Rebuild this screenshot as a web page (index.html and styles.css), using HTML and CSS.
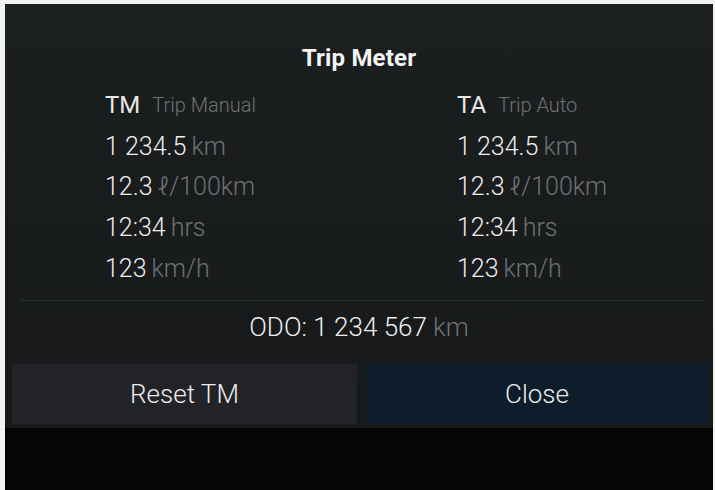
FILE: index.html
```html
<!DOCTYPE html>
<html>
<head>
<meta charset="utf-8">
<link rel="stylesheet" href="styles.css">
</head>
<body>
<div class="screen">
  <div class="panel">
    <h1 class="title">Trip Meter</h1>
    <div class="cols">
      <div class="col">
        <div class="row head"><span class="abbr">TM</span><span class="label">Trip Manual</span></div>
        <div class="row"><span class="val">1 234.5</span><span class="unit">km</span></div>
        <div class="row"><span class="val">12.3</span><span class="unit">ℓ/100km</span></div>
        <div class="row"><span class="val">12:34</span><span class="unit">hrs</span></div>
        <div class="row"><span class="val">123</span><span class="unit">km/h</span></div>
      </div>
      <div class="col">
        <div class="row head"><span class="abbr">TA</span><span class="label">Trip Auto</span></div>
        <div class="row"><span class="val">1 234.5</span><span class="unit">km</span></div>
        <div class="row"><span class="val">12.3</span><span class="unit">ℓ/100km</span></div>
        <div class="row"><span class="val">12:34</span><span class="unit">hrs</span></div>
        <div class="row"><span class="val">123</span><span class="unit">km/h</span></div>
      </div>
    </div>
    <div class="divider"></div>
    <div class="odo"><span class="odo-val">ODO: 1 234 567</span><span class="odo-unit">km</span></div>
    <div class="buttons">
      <div class="btn reset">Reset TM</div>
      <div class="btn close">Close</div>
    </div>
  </div>
  <div class="below"></div>
</div>
</body>
</html>
```

FILE: styles.css
```css
html, body {
  margin: 0;
  padding: 0;
  background: #f2f2f2;
}
body {
  width: 715px;
  height: 490px;
  overflow: hidden;
  font-family: Roboto, "Liberation Sans", sans-serif;
}
.screen {
  margin-left: 5px;
  padding-top: 4px;
  width: 708px;
}
.panel {
  height: 424px;
  background: linear-gradient(#1c1f20, #16181a);
  display: flex;
  flex-direction: column;
  box-sizing: border-box;
  padding-top: 40px;
}
.title {
  margin: 0;
  text-align: center;
  font-size: 24px;
  line-height: 28px;
  font-weight: 700;
  color: #f4f4f4;
  letter-spacing: 0.2px;
}
.cols {
  margin-top: 13px;
  display: grid;
  grid-template-columns: 352px 1fr;
  padding-left: 100px;
}
.row {
  height: 40.7px;
  display: flex;
  align-items: center;
  white-space: nowrap;
}
.abbr {
  font-size: 24px;
  font-weight: 400;
  color: #e8e8e8;
}
.label {
  font-size: 20px;
  font-weight: 300;
  color: #6f7173;
  margin-left: 12px;
}
.val {
  font-size: 25px;
  font-weight: 300;
  color: #ededed;
}
.unit {
  font-size: 25px;
  font-weight: 300;
  color: #6f7173;
  margin-left: 5px;
}
.divider {
  margin: 12px 10px 0 15px;
  height: 1px;
  background: #2a2d2f;
}
.odo {
  margin-top: 6px;
  height: 40px;
  display: flex;
  align-items: center;
  justify-content: center;
  font-size: 26px;
  font-weight: 300;
}
.odo-val {
  color: #ededed;
}
.odo-unit {
  color: #6f7173;
  margin-left: 6px;
}
.buttons {
  margin-top: 17px;
  padding: 0 5px 0 7px;
  display: flex;
  gap: 9px;
}
.btn {
  height: 60px;
  display: flex;
  align-items: center;
  justify-content: center;
  font-size: 26px;
  font-weight: 300;
  color: #ececec;
}
.reset {
  width: 345px;
  background: #222326;
}
.close {
  flex: 1;
  background: #0c1c2a;
}
.below {
  height: 62px;
  background: #050505;
}
```
